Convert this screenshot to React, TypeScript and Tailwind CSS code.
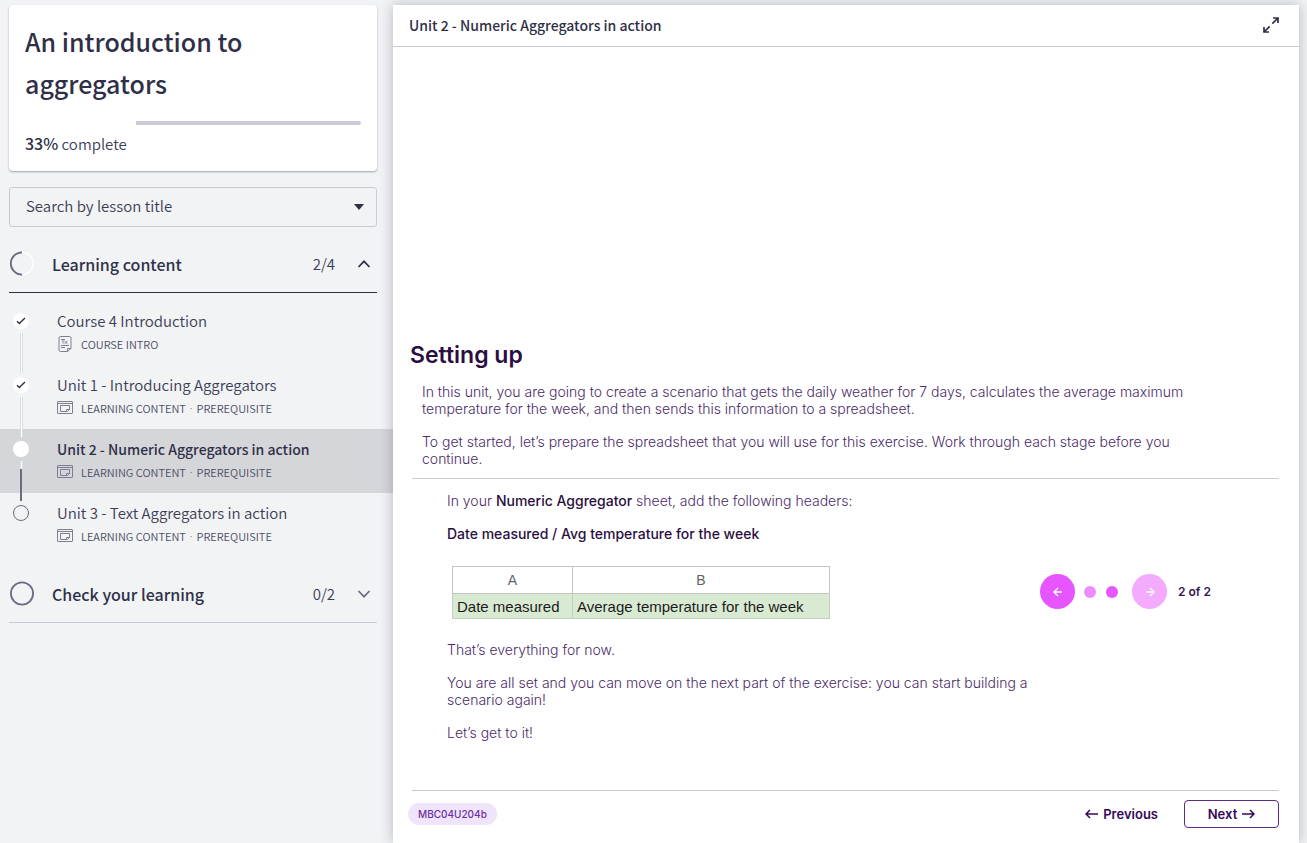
import type { ReactNode } from "react";

type Status = "done" | "current" | "todo";

interface Lesson {
  title: string;
  tags: string[];
  kind: "intro" | "unit";
  status: Status;
}

const lessons: Lesson[] = [
  { title: "Course 4 Introduction", tags: ["COURSE INTRO"], kind: "intro", status: "done" },
  { title: "Unit 1 - Introducing Aggregators", tags: ["LEARNING CONTENT", "PREREQUISITE"], kind: "unit", status: "done" },
  { title: "Unit 2 - Numeric Aggregators in action", tags: ["LEARNING CONTENT", "PREREQUISITE"], kind: "unit", status: "current" },
  { title: "Unit 3 - Text Aggregators in action", tags: ["LEARNING CONTENT", "PREREQUISITE"], kind: "unit", status: "todo" },
];

function IntroIcon() {
  return (
    <svg width="16" height="16" viewBox="0 0 16 16" fill="none" stroke="#7d7e93" aria-hidden="true">
      <path d="M10.5 15.5h-7a1.5 1.5 0 0 1-1.5-1.5V2A1.5 1.5 0 0 1 3.5 .5h9A1.5 1.5 0 0 1 14 2v10.5z" />
      <path d="M10.5 15.5v-3H14" />
      <path d="M4 3.5h4M6 3.5v4M7.5 5l3 2.8M10.5 5l-3 2.8M4 9.5h8M4 11.5h4" />
    </svg>
  );
}

function UnitIcon() {
  return (
    <svg width="16" height="14" viewBox="0 0 16 14" fill="none" stroke="#7d7e93" aria-hidden="true">
      <rect x="0.5" y="0.5" width="15" height="12" rx="0.5" />
      <path d="M0.5 2.5h15" />
      <path d="M3.5 4.5h9v4l-2 2h-7z" />
      <path d="M9.5 10.5v-2h3" />
    </svg>
  );
}

function StatusDot({ status }: { status: Status }) {
  if (status === "todo") return <span className="size-4 rounded-full border border-[#6b6c82]" />;
  return (
    <span className="flex size-4 items-center justify-center rounded-full bg-white">
      {status === "done" && (
        <svg width="10" height="8" viewBox="0 0 10 8" fill="none" stroke="#2f3044" strokeWidth="1.4" aria-hidden="true">
          <path d="M1 4.2l2.3 2.3L9 1" />
        </svg>
      )}
    </span>
  );
}

const lightLine = "w-[3px] border-x border-[#dcdde1] bg-white";
const darkLine = "w-[2px] bg-[#6b6c82]";

function Rail({ index, status }: { index: number; status: Status }) {
  return (
    <span className="flex w-4 shrink-0 flex-col items-center">
      <span className={`h-2 ${index === 0 ? "" : status === "todo" ? darkLine : lightLine}`} />
      <span className="flex py-1">
        <StatusDot status={status} />
      </span>
      {status === "done" && <span className={`h-8 ${lightLine}`} />}
      {status === "current" && (
        <>
          <span className={`h-2 ${lightLine}`} />
          <span className={`h-6 ${darkLine}`} />
        </>
      )}
    </span>
  );
}

function LessonRow({ lesson, index }: { lesson: Lesson; index: number }) {
  const current = lesson.status === "current";
  return (
    <li>
      <a href="#lesson" className={`flex h-16 gap-7 pl-[13px] ${current ? "bg-[#d5d6da]" : ""}`}>
        <Rail index={index} status={lesson.status} />
        <span className="flex flex-col pt-2">
          <span className={`leading-6 ${current ? "text-[14px] font-medium text-[#2f3048]" : "text-[15px] font-[350] text-[#3c3d56]"}`}>
            {lesson.title}
          </span>
          <span className="flex items-center gap-2 text-[11px] leading-[22px] font-[350] text-[#4c4d64]">
            {lesson.kind === "intro" ? <IntroIcon /> : <UnitIcon />}
            <span className="flex gap-1">
              {lesson.tags.map((tag, i) => (
                <span key={tag} className="flex gap-1">
                  {i > 0 && <span className="font-['Noto_Sans',sans-serif]">·</span>}
                  {tag}
                </span>
              ))}
            </span>
          </span>
        </span>
      </a>
    </li>
  );
}

function SectionHeader({ title, count, open, ring }: { title: string; count: string; open: boolean; ring: ReactNode }) {
  return (
    <button
      type="button"
      aria-expanded={open}
      className={`mx-[9px] flex h-[58px] w-[calc(100%-25px)] items-center border-b text-left ${open ? "border-[#2f3048]" : "border-[#cacbd6]"}`}
    >
      {ring}
      <span className="ml-[18px] flex-1 text-[16px] leading-6 font-medium text-[#2f3048]">{title}</span>
      <span className="text-[15px] leading-6 font-[350] text-[#3c3d56]">{count}</span>
      <svg
        className="mr-1.5 ml-[22px]"
        width="14"
        height="8"
        viewBox="0 0 14 8"
        fill="none"
        stroke={open ? "#2f3048" : "#6b6c82"}
        strokeWidth="1.7"
        aria-hidden="true"
      >
        <path d={open ? "M1.5 7L7 1.3 12.5 7" : "M1.5 1L7 6.7 12.5 1"} />
      </svg>
    </button>
  );
}

function Sidebar() {
  return (
    <aside className="w-[393px] shrink-0 pt-[5px] font-['Noto_Sans_CJK_SC','Noto_Sans',sans-serif]">
      <section className="mr-4 ml-[9px] rounded bg-white px-4 pt-[15px] pb-[15px] shadow-[0_1px_2px_rgba(40,42,60,0.4)]">
        <h1 className="text-[25px] leading-[42px] font-medium text-[#2f3048]">An introduction to aggregators</h1>
        <div className="mt-[17px] flex h-1" role="progressbar" aria-label="Course progress" aria-valuenow={33}>
          <div className="w-[33%] bg-white" />
          <div className="flex-1 rounded-r-sm bg-[#cacbd6]" />
        </div>
        <p className="mt-1.5 text-[15px] leading-6 font-[350] text-[#3c3d56]">
          <span className="text-[16px] font-medium text-[#2f3048]">33%</span> complete
        </p>
      </section>

      <div className="relative mt-4 mr-4 ml-[9px]">
        <select
          aria-label="Search by lesson title"
          className="h-10 w-full appearance-none rounded-[3px] border border-[#cacbd6] bg-transparent px-4 pb-0.5 text-[15px] font-[350] text-[#3c3d56]"
        >
          <option>Search by lesson title</option>
        </select>
        <svg className="pointer-events-none absolute top-[17px] right-[13px]" width="10" height="6" viewBox="0 0 10 6" fill="#2f3048" aria-hidden="true">
          <path d="M0 0h10L5 6z" />
        </svg>
      </div>

      <nav aria-label="Lessons" className="mt-2">
        <SectionHeader
          title="Learning content"
          count="2/4"
          open
          ring={
            <svg width="25" height="25" viewBox="0 0 25 25" fill="none" aria-hidden="true">
              <circle cx="13" cy="12.5" r="11.2" stroke="#e3e4e8" strokeWidth="1.8" />
              <path d="M13 1.3a11.2 11.2 0 0 1 0 22.4" stroke="#fff" strokeWidth="1.6" />
              <path d="M13 1.3a11.2 11.2 0 0 0 0 22.4" stroke="#6b6c82" strokeWidth="1.8" />
            </svg>
          }
        />
        <ul className="pt-2">
          {lessons.map((lesson, i) => (
            <LessonRow key={lesson.title} lesson={lesson} index={i} />
          ))}
        </ul>
        <div className="pt-2">
          <SectionHeader
            title="Check your learning"
            count="0/2"
            open={false}
            ring={
              <svg width="25" height="25" viewBox="0 0 25 25" fill="none" aria-hidden="true">
                <circle cx="13" cy="12.5" r="11.1" stroke="#6b6c82" strokeWidth="1.8" />
              </svg>
            }
          />
        </div>
      </nav>
    </aside>
  );
}

function Arrow({ dir, width, stroke }: { dir: "left" | "right"; width: number; stroke: number }) {
  const path = dir === "left" ? `M5 1L1 5l4 4M1 5h${width - 2}` : `M${width - 5} 1l4 4-4 4M${width - 1} 5H1`;
  return (
    <svg width={width} height="10" viewBox={`0 0 ${width} 10`} fill="none" stroke="currentColor" strokeWidth={stroke} aria-hidden="true">
      <path d={path} />
    </svg>
  );
}

function Pager() {
  return (
    <div className="mb-[50px] flex w-[239px] shrink-0 items-center">
      <button type="button" aria-label="Previous stage" className="flex size-[35px] items-center justify-center rounded-full bg-[#e655ff] text-white">
        <Arrow dir="left" width={10} stroke={1.4} />
      </button>
      <span className="ml-[9px] size-3 rounded-full bg-[#ef8bff]" />
      <span className="ml-[10px] size-3 rounded-full bg-[#e655ff]" />
      <button type="button" aria-label="Next stage" className="ml-[14px] flex size-[35px] items-center justify-center rounded-full bg-[#f3aaff] text-white">
        <Arrow dir="right" width={10} stroke={1.4} />
      </button>
      <span className="ml-[11px] text-[12px] leading-4 font-semibold text-[#34174f]">2 of 2</span>
    </div>
  );
}

function LessonPanel() {
  return (
    <main className="mt-[5px] mr-2 flex min-w-0 flex-1 flex-col bg-white shadow-[0_0_12px_rgba(40,42,60,0.3)]">
      <header className="flex h-[42px] items-center justify-between border-b border-[#cacbd6] pr-5 pb-0.5 pl-4">
        <h2 className="font-['Noto_Sans_CJK_SC','Noto_Sans',sans-serif] text-[14px] leading-6 font-medium text-[#2f3048]">
          Unit 2 - Numeric Aggregators in action
        </h2>
        <button type="button" aria-label="Full screen">
          <svg width="16" height="16" viewBox="0 0 16 16" fill="none" stroke="#2f3048" strokeWidth="1.7" aria-hidden="true">
            <path d="M10 1h5v5M15 1L9.3 6.7M6 15H1v-5M1 15l5.7-5.7" />
          </svg>
        </button>
      </header>

      <article className="flex flex-1 flex-col pt-[292px] pr-5 pl-[17px] font-['Inter',sans-serif] text-[14px] leading-[17px] font-light text-[#4a2b68]">
        <h3 className="text-[23px] leading-8 font-semibold text-[#2b0f42]">Setting up</h3>
        <div className="mt-3 ml-3 flex flex-col gap-4">
          <p>
            In this unit, you are going to create a scenario that gets the daily weather for 7 days, calculates the average maximum
            <br />
            temperature for the week, and then sends this information to a spreadsheet.
          </p>
          <p>
            To get started, let’s prepare the spreadsheet that you will use for this exercise. Work through each stage before you
            <br />
            continue.
          </p>
        </div>
        <hr className="mt-[11px] ml-0.5 border-[#cfcbd2]" />
        <div className="mt-[13px] ml-[37px] flex items-center">
          <div className="flex flex-1 flex-col gap-4">
            <p>
              In your <strong className="font-medium text-[#2b0f42]">Numeric Aggregator</strong> sheet, add the following headers:
            </p>
            <p className="font-medium text-[#2b0f42]">Date measured / Avg temperature for the week</p>
            <table className="mt-2 mb-[6px] ml-[5px] w-[378px] table-fixed border-collapse font-['Liberation_Sans',sans-serif] font-normal">
              <thead>
                <tr className="h-[27px] text-[#5f6368]">
                  <th className="w-[120px] border border-[#c4c4c4] font-normal">A</th>
                  <th className="border border-[#c4c4c4] font-normal">B</th>
                </tr>
              </thead>
              <tbody>
                <tr className="h-[25px] bg-[#d9ead3] text-[15px] text-[#1c1c1c]">
                  <td className="border border-[#c4cfc0] px-1">Date measured</td>
                  <td className="border border-[#c4cfc0] px-1">Average temperature for the week</td>
                </tr>
              </tbody>
            </table>
            <p>That’s everything for now.</p>
            <p>You are all set and you can move on the next part of the exercise: you can start building a scenario again!</p>
            <p>Let’s get to it!</p>
          </div>
          <Pager />
        </div>

        <footer className="mt-[49px] ml-0.5 flex items-center border-t border-[#c9c9cd] pt-[9px] pb-[15px]">
          <span className="-ml-1 rounded-full bg-[#f0e4fb] px-[10px] text-[10px] leading-[22px] font-medium text-[#6b2fa0]">MBC04U204b</span>
          <button type="button" className="mr-[26px] ml-auto flex items-center gap-1 text-[13px] font-semibold text-[#34095c]">
            <Arrow dir="left" width={14} stroke={1.5} />
            Previous
          </button>
          <button
            type="button"
            className="flex h-7 w-[95px] items-center justify-center gap-1 rounded border border-[#5b2a86] text-[13px] font-semibold text-[#34095c]"
          >
            Next
            <Arrow dir="right" width={14} stroke={1.5} />
          </button>
        </footer>
      </article>
    </main>
  );
}

export default function App() {
  return (
    <div className="flex min-h-screen bg-[#f1f3f5]">
      <Sidebar />
      <LessonPanel />
    </div>
  );
}
